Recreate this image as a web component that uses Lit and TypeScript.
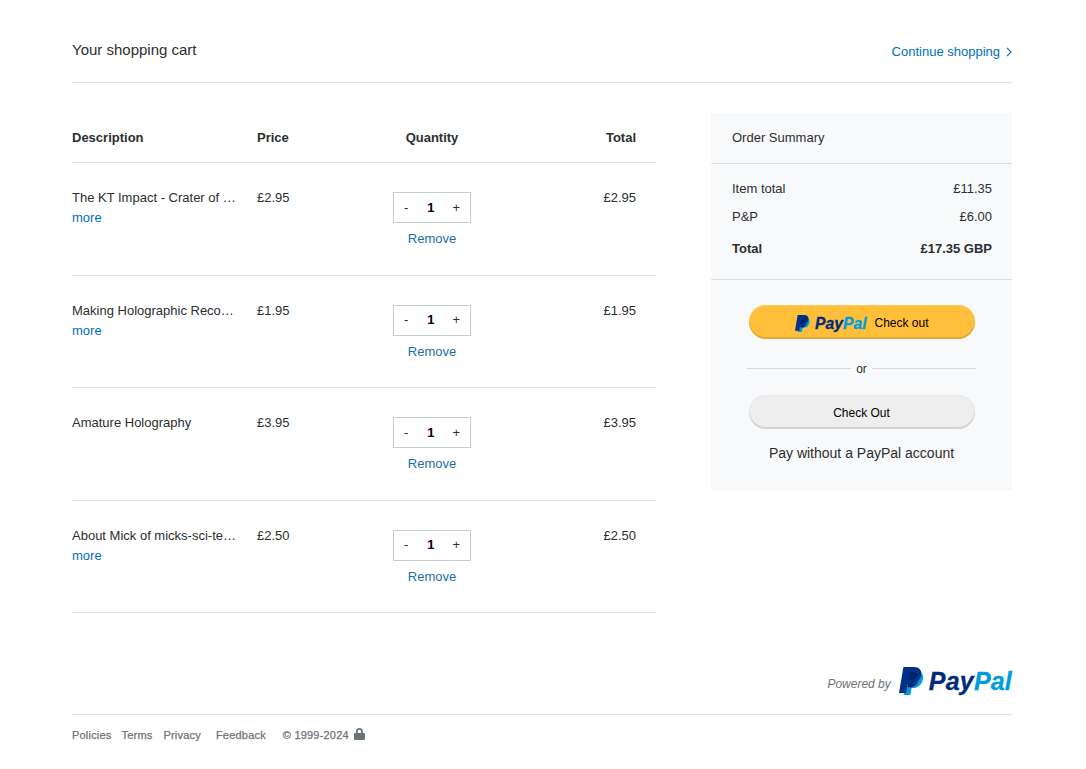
import { LitElement, html, css } from "lit";
import { customElement } from "lit/decorators.js";

const pmark = (h: number) => html`<svg class="pm" height=${h} width=${(h * 24) / 28} viewBox="0 0 24 28" aria-hidden="true">
  <path fill="#009cde" d="M21.800 5C24 7 24.400 9.500 23.900 12.200 22.800 18 18.800 21 13.800 21H12.600L11.300 28H4.600L5.300 24H7.500L9 17H11.500C17.500 17 21 13 21.800 5Z"/>
  <path fill="#003087" d="M4.400 0H14.500C20.300 0 23 3 22.100 8.200 21 14 16.800 17 11 17H8.800L7.300 26H0Z"/>
  <path fill="#012169" d="M11 5H14.800C17.300 5 18.100 6.800 17.600 9 17 11.500 14.800 12.800 12 12.800H9.600Z"/>
  <path fill="#012169" d="M8.800 17H11C14.500 17 17.500 16 19.500 13.800 18 17.600 15.500 19.500 12 20.500L8.300 20Z"/>
</svg>`;

const items = [
  { name: "The KT Impact - Crater of Doom and Mass Extinction", price: "£2.95", more: true },
  { name: "Making Holographic Recordings at Home", price: "£1.95", more: true },
  { name: "Amature Holography", price: "£3.95", more: false },
  { name: "About Mick of micks-sci-tech-shop", price: "£2.50", more: true },
];

@customElement("app-root")
export class AppRoot extends LitElement {
  static styles = css`
    :host { display: block; font-family: "Liberation Sans", Arial, sans-serif; font-size: 13px; color: #2c2e2f; background: #fff; min-height: 769px; }
    * { box-sizing: border-box; }
    a { text-decoration: none; }
    .page { width: 940px; margin-left: 72px; padding-top: 41px; }
    .top { display: flex; justify-content: space-between; height: 42px; border-bottom: 1px solid #dcdfe1; }
    .title { font-size: 15px; line-height: 18px; }
    .cont { display: flex; align-items: center; gap: 6px; height: 18px; margin-top: 2px; color: #0070ba; line-height: 18px; }
    .main { display: flex; justify-content: space-between; align-items: flex-start; margin-top: 30px; }
    .cart { width: 584px; }
    .row { display: grid; grid-template-columns: 185px 90px 170px 1fr; }
    .head { height: 50px; align-items: center; font-weight: 700; border-bottom: 1px solid #dcdfe1; padding-bottom: 1px; }
    .item { height: 112.500px; padding-top: 26px; border-bottom: 1px solid #dcdfe1; line-height: 18px; }
    .c { text-align: center; }
    .r { text-align: right; padding-right: 20px; }
    .desc { min-width: 0; padding-right: 20px; }
    .name { white-space: nowrap; overflow: hidden; text-overflow: ellipsis; }
    .more { display: block; color: #0070ba; margin-top: 2px; }
    .qtycell { display: flex; flex-direction: column; align-items: center; padding-top: 3px; }
    .qty { display: flex; align-items: center; justify-content: space-between; width: 78px; height: 31px; border: 1px solid #c9ced1; padding: 0 10px 0 10px; background: #fff; color: #2c2e2f; }
    .qty b { font-weight: 700; color: #000; margin-left: 1px; }
    .remove { color: #1a6ea8; margin-top: 7px; }
    .side { width: 301px; height: 377px; background: #f8f9fb; }
    .shead { height: 51px; padding: 0 20px 1px 21px; display: flex; align-items: center; border-bottom: 1px solid #dcdfe1; }
    .lines { height: 116px; padding: 16px 20px 0 21px; border-bottom: 1px solid #dcdfe1; }
    .line { display: flex; justify-content: space-between; line-height: 18px; margin-bottom: 10px; }
    .line.total { font-weight: 700; margin-top: 14px; }
    .pay { display: flex; flex-direction: column; align-items: center; padding-top: 25px; }
    .btn { width: 226px; height: 34px; border-radius: 17px; display: flex; align-items: center; justify-content: center; color: #000; font-size: 12px; padding-top: 2px; }
    .ppbtn { background: #ffbf3a; box-shadow: inset 0 -2px 0 #e2a93c, inset 0 1px 0 #ffca55; gap: 8px; padding-left: 1px; }
    .mark { display: inline-flex; align-items: center; gap: 5px; }
    .ppbtn .mark { margin-top: 1px; }
    .pm { display: block; }
    .word { font-weight: 700; font-style: italic; color: #012a7a; line-height: 1; -webkit-text-stroke: 0.3px currentColor; }
    .word span { color: #019cde; }
    .ppbtn .word { font-size: 15.700px; }
    .or { width: 229px; display: flex; align-items: center; gap: 5px; margin: 20px 0 18px; font-size: 12px; line-height: 18px; color: #2c2e2f; }
    .or::before, .or::after { content: ""; flex: 1; height: 1px; background: #d5d8da; }
    .or-text { position: relative; top: 1px; }
    .ckbtn { background: #eeeeee; box-shadow: inset 0 -2px 1px #cfd1d2, inset 0 0 2px #ddd; }
    .nopp { margin-top: 15px; line-height: 18px; font-size: 14px; }
    .powered { display: flex; justify-content: flex-end; align-items: center; gap: 8px; margin-top: 54px; height: 28px; }
    .powered i { font-size: 12px; color: #6c7378; margin-top: 6px; }
    .powered .mark { gap: 6px; }
    .powered .word { font-size: 25px; letter-spacing: 0.2px; }
    .foot { margin-top: 19px; border-top: 1px solid #dcdfe1; display: flex; align-items: center; height: 40px; font-size: 11px; letter-spacing: 0.2px; color: #6c7378; -webkit-text-stroke: 0.25px #6c7378; }
    .foot a { color: #6c7378; white-space: nowrap; }
    .foot span { white-space: nowrap; }
    .f1 { margin-right: 10px; }
    .f2 { margin-right: 11px; }
    .f3 { margin-right: 15px; }
    .f4 { margin-right: 17px; }
    .lock { margin-left: 5px; margin-top: -2px; display: block; }
  `;

  render() {
    return html`<div class="page">
      <div class="top">
        <div class="title">Your shopping cart</div>
        <a class="cont" href="#">Continue shopping
          <svg width="6" height="10" viewBox="0 0 6 10" aria-hidden="true"><path d="M1 .8 5 5 1 9.200" fill="none" stroke="#0070ba" stroke-width="1.100"/></svg>
        </a>
      </div>
      <div class="main">
        <div class="cart">
          <div class="row head"><div>Description</div><div>Price</div><div class="c">Quantity</div><div class="r">Total</div></div>
          ${items.map((it) => html`<div class="row item">
            <div class="desc"><div class="name">${it.name}</div>${it.more ? html`<a class="more" href="#">more</a>` : ""}</div>
            <div>${it.price}</div>
            <div class="qtycell">
              <div class="qty"><span>-</span><b>1</b><span>+</span></div>
              <a class="remove" href="#">Remove</a>
            </div>
            <div class="r">${it.price}</div>
          </div>`)}
        </div>
        <div class="side">
          <div class="shead">Order Summary</div>
          <div class="lines">
            <div class="line"><span>Item total</span><span>£11.35</span></div>
            <div class="line"><span>P&amp;P</span><span>£6.00</span></div>
            <div class="line total"><span>Total</span><span>£17.35 GBP</span></div>
          </div>
          <div class="pay">
            <div class="btn ppbtn"><span class="mark">${pmark(17)}<span class="word">Pay<span>Pal</span></span></span><span>Check out</span></div>
            <div class="or"><span class="or-text">or</span></div>
            <div class="btn ckbtn">Check Out</div>
            <div class="nopp">Pay without a PayPal account</div>
          </div>
        </div>
      </div>
      <div class="powered"><i>Powered by</i><span class="mark">${pmark(28)}<span class="word">Pay<span>Pal</span></span></span></div>
      <div class="foot">
        <a class="f1" href="#">Policies</a>
        <a class="f2" href="#">Terms</a>
        <a class="f3" href="#">Privacy</a>
        <a class="f4" href="#">Feedback</a>
        <span>© 1999-2024</span>
        <svg class="lock" width="11" height="12" viewBox="0 0 11 12" aria-hidden="true"><path fill="#6c7378" d="M5.500 0C3.400 0 2 1.500 2 3.500V5H1a1 1 0 0 0-1 1v5a1 1 0 0 0 1 1h9a1 1 0 0 0 1-1V6a1 1 0 0 0-1-1H9V3.500C9 1.500 7.600 0 5.500 0Zm0 1.700c1 0 1.700.7 1.700 1.800V5H3.800V3.500c0-1.100.7-1.800 1.700-1.800Z"/></svg>
      </div>
    </div>`;
  }
}
